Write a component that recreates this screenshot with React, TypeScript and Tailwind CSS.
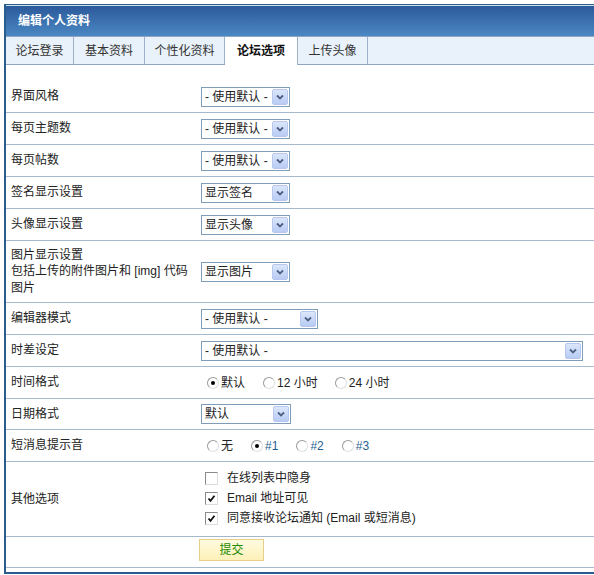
import type { ReactNode } from "react";

const font = { fontFamily: '"Liberation Sans", "Noto Sans CJK SC", sans-serif' };

const tabs = ["论坛登录", "基本资料", "个性化资料", "论坛选项", "上传头像"];
const tabWidths = ["w-[68px]", "w-[71px]", "w-[80px]", "w-[73px]", "w-[70px]"];

function Chevron() {
  return (
    <svg width="8" height="6" viewBox="0 0 8 6">
      <path d="M1 1.5 L4 4.5 L7 1.5" fill="none" stroke="#4d6185" strokeWidth="1.8" />
    </svg>
  );
}

function FakeSelect({ text, className }: { text: string; className: string }) {
  return (
    <div className={`flex items-center h-[20px] border border-[#7f9db9] bg-white ${className}`}>
      <span className="flex-1 pl-[3px] text-[12px] text-[#222] whitespace-nowrap overflow-hidden">{text}</span>
      <span className="w-[16px] h-[16px] mr-[1px] rounded-[2px] border border-[#b6c8ef] bg-gradient-to-b from-[#dce6fb] to-[#b7cbf3] flex items-center justify-center">
        <Chevron />
      </span>
    </div>
  );
}

function Radio({ checked, label, blue }: { checked?: boolean; label: string; blue?: boolean }) {
  return (
    <span className="flex items-center">
      <span className="w-[12px] h-[12px] rounded-full border border-[#9a9a9a] border-r-[#e0e0e0] border-b-[#e0e0e0] bg-white flex items-center justify-center">
        {checked && <span className="w-[4px] h-[4px] rounded-full bg-black" />}
      </span>
      <span className={`ml-[2px] ${blue ? "text-[#1f5f8f]" : "text-[#222]"}`}>{label}</span>
    </span>
  );
}

function Checkbox({ checked, label }: { checked?: boolean; label: string }) {
  return (
    <div className="flex items-center h-[20px]">
      <span className="w-[13px] h-[13px] border border-[#8a8a8a] border-r-[#dcdcdc] border-b-[#dcdcdc] bg-white flex items-center justify-center">
        {checked && (
          <svg width="9" height="9" viewBox="0 0 9 9">
            <path d="M1.5 4.5 L3.5 6.8 L7.5 1.8" fill="none" stroke="#111" strokeWidth="1.8" />
          </svg>
        )}
      </span>
      <span className="ml-[9px] text-[#222]">{label}</span>
    </div>
  );
}

function Row({
  label,
  children,
  tall,
  top,
}: {
  label: ReactNode;
  children?: ReactNode;
  tall?: string;
  top?: boolean;
}) {
  return (
    <div className={`flex ${top ? "items-start" : "items-center"} border-b border-[#a6b8cb] ${tall ?? "h-[32px]"}`}>
      <div className="w-[195px] pl-[5px] text-[#222] leading-[16.5px] self-center">{label}</div>
      <div className="flex-1 flex items-center">{children}</div>
    </div>
  );
}

export default function App() {
  return (
    <div className="w-[594px] h-[575px] overflow-hidden bg-white pt-[4px] pl-[4px] text-[12px]" style={font}>
      <div className="w-[600px] border-l-2 border-t border-b-2 border-[#2a5c8e]">
        {/* title bar */}
        <div className="h-[31px] bg-gradient-to-b from-[#2c5a9b] to-[#4b88c3] flex items-center pl-[12px] border-t border-[#cfe0ef]">
          <span className="text-white font-bold text-[12px]">编辑个人资料</span>
        </div>

        {/* tabs */}
        <div className="h-[29px] bg-[#e9f1fa] border-t border-[#2d5f95] border-b border-[#8ea6c4] flex">
          {tabs.map((t, i) => {
            const active = i === 3;
            return (
              <div
                key={t}
                className={`${tabWidths[i]} flex items-center justify-center border-r border-[#9cb2cb] ${
                  active ? "bg-white font-bold text-[#111] h-[28px]" : "h-[27px] text-[#333]"
                }`}
              >
                {t}
              </div>
            );
          })}
        </div>

        {/* form */}
        <div className="pt-[16px]">
          <Row label="界面风格">
            <FakeSelect text="- 使用默认 -" className="w-[89px]" />
          </Row>
          <Row label="每页主题数">
            <FakeSelect text="- 使用默认 -" className="w-[89px]" />
          </Row>
          <Row label="每页帖数">
            <FakeSelect text="- 使用默认 -" className="w-[89px]" />
          </Row>
          <Row label="签名显示设置">
            <FakeSelect text="显示签名" className="w-[89px]" />
          </Row>
          <Row label="头像显示设置">
            <FakeSelect text="显示头像" className="w-[89px]" />
          </Row>
          <Row
            tall="h-[62px]"
            label={
              <>
                图片显示设置
                <br />
                包括上传的附件图片和 [img] 代码
                <br />
                图片
              </>
            }
          >
            <FakeSelect text="显示图片" className="w-[89px]" />
          </Row>
          <Row label="编辑器模式">
            <FakeSelect text="- 使用默认 -" className="w-[117px]" />
          </Row>
          <Row label="时差设定">
            <FakeSelect text="- 使用默认 -" className="w-[382px]" />
          </Row>
          <Row label="时间格式">
            <div className="flex items-center pl-[6px]">
              <Radio checked label="默认" />
              <span className="w-[18px]" />
              <Radio label="12 小时" />
              <span className="w-[17px]" />
              <Radio label="24 小时" />
            </div>
          </Row>
          <Row label="日期格式" tall="h-[31px]">
            <FakeSelect text="默认" className="w-[90px]" />
          </Row>
          <Row label="短消息提示音">
            <div className="flex items-center pl-[6px] gap-[18px]">
              <Radio label="无" />
              <Radio checked label="#1" blue />
              <Radio label="#2" blue />
              <Radio label="#3" blue />
            </div>
          </Row>
          <Row label="其他选项" tall="h-[75px]">
            <div className="flex flex-col pl-[4px] -mt-[2px]">
              <Checkbox label="在线列表中隐身" />
              <Checkbox checked label="Email 地址可见" />
              <Checkbox checked label="同意接收论坛通知 (Email 或短消息)" />
            </div>
          </Row>
          <Row label="" tall="h-[31px]" top>
            <button className="-ml-[2px] mt-[2px] w-[65px] h-[22px] border border-[#e6cf88] bg-gradient-to-b from-[#fffbe0] to-[#fdf0b8] text-[#1b8a00] text-[12px]">
              提交
            </button>
          </Row>
          <div className="h-[4px]" />
        </div>
      </div>
    </div>
  );
}
